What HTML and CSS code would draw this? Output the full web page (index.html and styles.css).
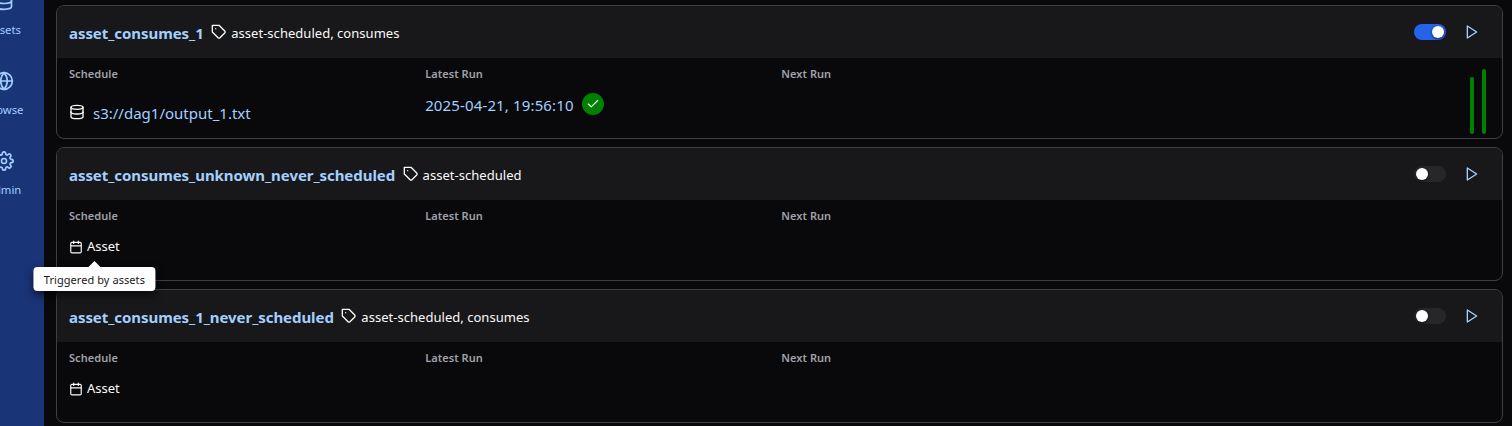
FILE: index.html
```
<!DOCTYPE html>
<html lang="en">
<head>
<meta charset="utf-8">
<title>Dags</title>
<link rel="stylesheet" href="styles.css">
</head>
<body>
<svg class="defs" aria-hidden="true">
  <symbol id="database" viewBox="0 0 24 24"><ellipse cx="12" cy="5" rx="9" ry="3"/><path d="M21 12c0 1.66-4 3-9 3s-9-1.34-9-3"/><path d="M3 5v14c0 1.66 4 3 9 3s9-1.34 9-3V5"/></symbol>
  <symbol id="globe" viewBox="0 0 24 24"><circle cx="12" cy="12" r="10"/><path d="M2 12h20"/><path d="M12 2a15.3 15.3 0 0 1 4 10 15.3 15.3 0 0 1-4 10 15.3 15.3 0 0 1-4-10 15.3 15.3 0 0 1 4-10z"/></symbol>
  <symbol id="settings" viewBox="0 0 24 24"><circle cx="12" cy="12" r="3"/><path d="M19.4 15a1.65 1.65 0 0 0 .33 1.82l.06.06a2 2 0 0 1-2.83 2.83l-.06-.06a1.65 1.65 0 0 0-2.82 1.18V21a2 2 0 0 1-4 0v-.09A1.65 1.65 0 0 0 9 19.4a1.65 1.65 0 0 0-1.82.33l-.06.06a2 2 0 0 1-2.83-2.83l.06-.06a1.65 1.65 0 0 0-1.18-2.82H3a2 2 0 0 1 0-4h.09A1.65 1.65 0 0 0 4.6 9a1.65 1.65 0 0 0-.33-1.82l-.06-.06a2 2 0 0 1 2.83-2.83l.06.06a1.65 1.65 0 0 0 1.82.33H9a1.65 1.65 0 0 0 1-1.51V3a2 2 0 0 1 4 0v.09a1.65 1.65 0 0 0 2.82 1.18l.06-.06a2 2 0 0 1 2.83 2.83l-.06.06a1.65 1.65 0 0 0-.33 1.82V9a1.65 1.65 0 0 0 1.51 1H21a2 2 0 0 1 0 4h-.09a1.65 1.65 0 0 0-1.51 1z"/></symbol>
  <symbol id="tag" viewBox="0 0 24 24"><path d="M20.59 13.41l-7.17 7.17a2 2 0 0 1-2.83 0L2 12V2h10l8.59 8.59a2 2 0 0 1 0 2.82z"/><path d="M7 7h.01"/></symbol>
  <symbol id="calendar" viewBox="0 0 24 24"><rect x="3" y="4" width="18" height="18" rx="2"/><path d="M16 2v4M8 2v4M3 10h18"/></symbol>
  <symbol id="play" viewBox="0 0 24 24"><path d="M5 3l14 9-14 9z"/></symbol>
  <symbol id="check" viewBox="0 0 24 24"><path d="M20 6L9 17l-5-5"/></symbol>
</svg>

<div class="app">
  <nav class="sidebar">
    <a class="nav-item"><svg class="icon"><use href="#database"/></svg><span>Assets</span></a>
    <a class="nav-item"><svg class="icon"><use href="#globe"/></svg><span>Browse</span></a>
    <a class="nav-item"><svg class="icon"><use href="#settings"/></svg><span>Admin</span></a>
  </nav>

  <main class="dag-list">
    <article class="card">
      <header class="card-header">
        <a class="title">asset_consumes_1</a>
        <span class="tags"><svg class="icon"><use href="#tag"/></svg><span>asset-scheduled, consumes</span></span>
        <span class="switch on"><span class="thumb"></span></span>
        <svg class="icon play"><use href="#play"/></svg>
      </header>
      <div class="card-body">
        <section><h3>Schedule</h3><div class="asset-link"><svg class="icon"><use href="#database"/></svg><a>s3://dag1/output_1.txt</a></div></section>
        <section><h3>Latest Run</h3><div class="run"><a>2025-04-21, 19:56:10</a><span class="badge"><svg class="icon"><use href="#check"/></svg></span></div></section>
        <section><h3>Next Run</h3></section>
        <section class="runs"><span class="bar short"></span><span class="bar"></span></section>
      </div>
    </article>

    <article class="card">
      <header class="card-header">
        <a class="title">asset_consumes_unknown_never_scheduled</a>
        <span class="tags"><svg class="icon"><use href="#tag"/></svg><span>asset-scheduled</span></span>
        <span class="switch"><span class="thumb"></span></span>
        <svg class="icon play"><use href="#play"/></svg>
      </header>
      <div class="card-body">
        <section><h3>Schedule</h3><div class="schedule"><svg class="icon"><use href="#calendar"/></svg><span>Asset</span><div class="tooltip">Triggered by assets</div></div></section>
        <section><h3>Latest Run</h3></section>
        <section><h3>Next Run</h3></section>
      </div>
    </article>

    <article class="card">
      <header class="card-header">
        <a class="title">asset_consumes_1_never_scheduled</a>
        <span class="tags"><svg class="icon"><use href="#tag"/></svg><span>asset-scheduled, consumes</span></span>
        <span class="switch"><span class="thumb"></span></span>
        <svg class="icon play"><use href="#play"/></svg>
      </header>
      <div class="card-body">
        <section><h3>Schedule</h3><div class="schedule"><svg class="icon"><use href="#calendar"/></svg><span>Asset</span></div></section>
        <section><h3>Latest Run</h3></section>
        <section><h3>Next Run</h3></section>
      </div>
    </article>
  </main>
</div>
</body>
</html>
```
FILE: styles.css
```
* { box-sizing: border-box; }
body {
  margin: 0;
  height: 426px;
  overflow: hidden;
  background: #09090b;
  color: #fafafa;
  font: 14px/20px "Noto Sans", sans-serif;
}
.defs { display: none; }
.icon {
  flex: none;
  fill: none;
  stroke: currentColor;
  stroke-width: 2;
  stroke-linecap: round;
  stroke-linejoin: round;
}
.app { display: flex; height: 426px; overflow: hidden; }
.sidebar {
  flex: none;
  width: 80px;
  margin-left: -36px;
  margin-top: -29px;
  background: #1a3478;
  color: #a3cfff;
}
.nav-item {
  display: flex;
  flex-direction: column;
  align-items: center;
  height: 80px;
  padding-top: 20px;
  gap: 10px;
  font-size: 11.25px;
  line-height: 18px;
}
.nav-item .icon { width: 20px; height: 20px; }
.dag-list {
  flex: 1;
  display: flex;
  flex-direction: column;
  gap: 8px;
  padding: 5px 9px 0 12px;
}
.card {
  flex: none;
  height: 134px;
  border: 1px solid #3f3f46;
  border-radius: 8px;
}
.card-header {
  display: flex;
  align-items: center;
  height: 52px;
  padding: 0 22px 0 12px;
  background: #18181b;
  border-radius: 7px 7px 0 0;
}
.title { color: #a3cfff; font-size: 15px; font-weight: 700; letter-spacing: -.06px; padding-top: 1px; }
.tags { display: flex; align-items: center; gap: 4px; margin-left: 7.5px; font-size: 13px; letter-spacing: .03px; }
.tags .icon { width: 16px; height: 16px; }
.tags span { padding-top: 2px; }
.switch {
  width: 32px;
  height: 16px;
  margin-left: auto;
  padding: 2px;
  border-radius: 8px;
  background: #27272a;
}
.thumb {
  display: block;
  width: 12px;
  height: 12px;
  border-radius: 50%;
  background: #fff;
  box-shadow: 0 1px 3px rgba(0, 0, 0, .6);
}
.switch.on { background: #2563eb; }
.switch.on .thumb { margin-left: 16px; }
.play { width: 16px; height: 16px; margin-left: 18px; color: #a3cfff; }
.card-body {
  display: grid;
  grid-template-columns: repeat(4, 1fr);
  column-gap: 3.5px;
  height: 80px;
  padding: 8px 12px 4px;
}
h3 { margin: 0; color: #a1a1aa; font-size: 11px; line-height: 16px; font-weight: 600; letter-spacing: .05px; }
.asset-link, .run { display: flex; align-items: center; color: #a3cfff; font-size: 15px; }
.asset-link { gap: 8px; margin-top: 21px; }
.asset-link .icon { width: 16px; height: 16px; color: #fafafa; position: relative; top: -1px; }
.run { gap: 8px; margin-top: 11px; letter-spacing: .14px; }
.run a { padding-top: 2px; }
.badge {
  display: grid;
  place-items: center;
  width: 22px;
  height: 22px;
  border-radius: 50%;
  background: #008000;
  color: #fff;
}
.badge .icon { width: 14px; height: 14px; }
.runs { display: flex; align-items: flex-end; justify-content: flex-end; gap: 8px; padding-right: 4px; }
.bar { width: 4px; height: 65px; border-radius: 2px; background: #008000; }
.bar.short { height: 57px; }
.schedule {
  position: relative;
  display: flex;
  align-items: center;
  gap: 4px;
  width: max-content;
  margin-top: 12px;
  font-size: 13px;
}
.schedule .icon { width: 14px; height: 14px; margin-top: 1px; }
.tooltip {
  position: absolute;
  z-index: 2;
  top: 31px;
  left: 50%;
  transform: translateX(-50%);
  height: 24px;
  padding: 0 10px;
  border-radius: 4px;
  background: #fff;
  color: #18181b;
  font-size: 11px;
  letter-spacing: .06px;
  line-height: 25px;
  white-space: nowrap;
  box-shadow: 0 4px 8px rgba(0, 0, 0, .64);
}
.tooltip::before {
  content: "";
  position: absolute;
  top: -6px;
  left: 50%;
  margin-left: -6px;
  border: 6px solid transparent;
  border-top: 0;
  border-bottom-color: #fff;
}
```
